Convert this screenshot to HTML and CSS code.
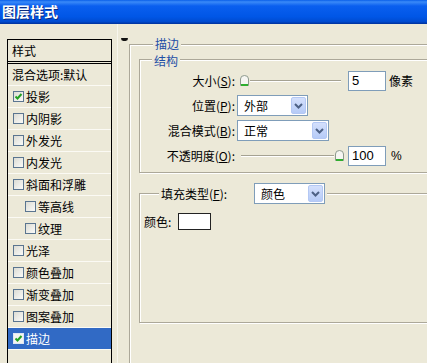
FILE: index.html
```html
<!DOCTYPE html>
<html lang="zh-CN">
<head>
  <meta charset="UTF-8" />
  <meta name="viewport" content="width=device-width, initial-scale=1.0"/>
  <title>图层样式</title>
  <link rel="stylesheet" href="styles.css">
</head>
<body>
  <div class="titlebar">图层样式</div>

  <div class="dialog">
    <div class="sidebar">
      <ul class="style-list">
        <li class="list-head">样式</li>
        <li class="item blend">混合选项:默认</li>
        <li class="item"><span class="check on"><svg width="9" height="9" viewBox="0 0 9 9"><path d="M1.5 4.5 L3.5 6.5 L7.5 2" fill="none" stroke="#21a121" stroke-width="2"/></svg></span>投影</li>
        <li class="item"><span class="check"></span>内阴影</li>
        <li class="item"><span class="check"></span>外发光</li>
        <li class="item"><span class="check"></span>内发光</li>
        <li class="item"><span class="check"></span>斜面和浮雕</li>
        <li class="item sub"><span class="check"></span>等高线</li>
        <li class="item sub"><span class="check"></span>纹理</li>
        <li class="item"><span class="check"></span>光泽</li>
        <li class="item"><span class="check"></span>颜色叠加</li>
        <li class="item"><span class="check"></span>渐变叠加</li>
        <li class="item"><span class="check"></span>图案叠加</li>
        <li class="item selected"><span class="check on"><svg width="9" height="9" viewBox="0 0 9 9"><path d="M1.5 4.5 L3.5 6.5 L7.5 2" fill="none" stroke="#21a121" stroke-width="2"/></svg></span>描边</li>
      </ul>
    </div>

    <div class="panel">
      <span class="grip"></span>
      <div class="group outer">
        <div class="group-title outer-title">描边</div>

        <div class="group inner">
          <div class="group-title">结构</div>

          <div class="field">
            <label>大小(<u>S</u>):</label>
            <div class="slider size">
              <svg class="thumb" width="11" height="13" viewBox="0 0 11 13"><path d="M1.5 5 Q1.5 1.5 5.5 1.5 Q9.5 1.5 9.5 5 V11.5 H1.5 Z" fill="#f6f6f2" stroke="#8e9a8e"/><path d="M2 11 H9" stroke="#2fae2f" stroke-width="2"/></svg>
              <span class="track"></span>
            </div>
            <div class="num">5</div>
            <span class="unit">像素</span>
          </div>

          <div class="field">
            <label>位置(<u>P</u>):</label>
            <div class="combo short">
              <span class="combo-text">外部</span>
              <span class="drop"><svg width="9" height="6" viewBox="0 0 9 6"><path d="M1 1 L4.5 4.5 L8 1" fill="none" stroke="#4d6185" stroke-width="2"/></svg></span>
            </div>
          </div>

          <div class="field">
            <label>混合模式(<u>B</u>):</label>
            <div class="combo long">
              <span class="combo-text">正常</span>
              <span class="drop"><svg width="9" height="6" viewBox="0 0 9 6"><path d="M1 1 L4.5 4.5 L8 1" fill="none" stroke="#4d6185" stroke-width="2"/></svg></span>
            </div>
          </div>

          <div class="field">
            <label>不透明度(<u>O</u>):</label>
            <div class="slider opacity">
              <span class="track"></span>
              <svg class="thumb" width="11" height="13" viewBox="0 0 11 13"><path d="M1.5 5 Q1.5 1.5 5.5 1.5 Q9.5 1.5 9.5 5 V11.5 H1.5 Z" fill="#f6f6f2" stroke="#8e9a8e"/><path d="M2 11 H9" stroke="#2fae2f" stroke-width="2"/></svg>
            </div>
            <div class="num">100</div>
            <span class="unit pct">%</span>
          </div>
        </div>

        <div class="group fill">
          <div class="group-title fill-title">
            <span class="fill-label">填充类型(<u>F</u>):</span>
            <div class="combo short">
              <span class="combo-text">颜色</span>
              <span class="drop"><svg width="9" height="6" viewBox="0 0 9 6"><path d="M1 1 L4.5 4.5 L8 1" fill="none" stroke="#4d6185" stroke-width="2"/></svg></span>
            </div>
          </div>
          <div class="color-row">
            <span>颜色:</span>
            <span class="swatch"></span>
          </div>
        </div>
      </div>
    </div>
  </div>
</body>
</html>
```

FILE: styles.css
```css
body {
  margin: 0;
  width: 427px;
  height: 363px;
  overflow: hidden;
  background: #ece9d8;
  font-family: "Noto Sans CJK SC", "Noto Sans", sans-serif;
  font-size: 12px;
  color: #000;
}

.titlebar {
  height: 24px;
  line-height: 23px;
  padding-left: 2px;
  font-size: 14px;
  font-weight: bold;
  color: #fff;
  text-shadow: 1px 1px #0a2a80;
  background: linear-gradient(#0a5fe9 0%, #3a8af8 8%, #0a5fef 25%, #0056e6 70%, #004bd0 90%, #00309a 100%);
}

.dialog {
  display: flex;
  height: 339px;
}

/* left list */
.sidebar {
  width: 117px;
  flex-shrink: 0;
  padding-top: 15px;
  box-sizing: border-box;
}

.style-list {
  list-style: none;
  margin: 0 0 0 7px;
  padding: 0;
  width: 105px;
  height: 330px;
  box-sizing: border-box;
  border: 1px solid #000;
  border-bottom: none;
}

.list-head {
  height: 21px;
  line-height: 21px;
  padding-left: 4px;
  border-bottom: 3px double #000;
}

.item {
  height: 21px;
  line-height: 21px;
  padding-left: 5px;
  border-bottom: 1px solid #fbfaf4;
  display: flex;
  align-items: center;
  white-space: nowrap;
}

.item.blend {
  padding-left: 4px;
}

.item.sub {
  padding-left: 17px;
}

.item.selected {
  background: #316ac5;
  color: #fff;
}

.check {
  width: 11px;
  height: 11px;
  box-sizing: border-box;
  margin-right: 2px;
  border: 1px solid #5a7590;
  background: linear-gradient(135deg, #dcdcd4, #fafaf8);
  display: flex;
  align-items: center;
  justify-content: center;
}

.item.selected .check {
  border-color: #dfe6f2;
  background: #f4f4f0;
}

/* right panel */
.panel {
  flex: 1;
  border-left: 1px solid #f7f6ee;
  overflow: hidden;
}

.grip {
  display: block;
  width: 7px;
  height: 3px;
  margin: 14px 0 0 3px;
  background: #111;
  border-radius: 1px 1px 4px 4px;
}

.group {
  border: 1px solid #aca899;
  box-shadow: inset 1px 1px 0 #fff, 1px 1px 0 #fff;
}

.group-title {
  width: fit-content;
  height: 14px;
  line-height: 14px;
  margin: -7px 0 0 14px;
  padding: 0 2px;
  background: #ece9d8;
  color: #1e4fa6;
}

.outer-title {
  height: 13px;
  line-height: 13px;
  margin-top: -8px;
}

.outer {
  width: 330px;
  margin: 3px 0 0 11px;
  padding: 0 0 80px 9px;
}

.inner {
  margin-top: 9px;
  padding-bottom: 4px;
}

.inner .group-title {
  margin-left: 12px;
  height: 13px;
  line-height: 13px;
  margin-top: -6px;
}

.field {
  height: 25px;
  display: flex;
  align-items: center;
}

.inner .group-title + .field {
  margin-top: 1px;
}

.field label {
  width: 95px;
  text-align: right;
  white-space: nowrap;
}

.slider {
  display: flex;
  align-items: center;
  height: 14px;
}

.slider.size {
  width: 102px;
  margin-left: 4px;
}

.slider.opacity {
  width: 104px;
  margin-left: 6px;
}

.track {
  flex: 1;
  height: 0;
  border-top: 1px solid #a5a292;
  border-bottom: 1px solid #fff;
  margin-top: 1px;
}

.thumb {
  flex-shrink: 0;
}

.num {
  width: 38px;
  height: 20px;
  box-sizing: border-box;
  margin-left: 7px;
  padding-left: 3px;
  border: 1px solid #7f9db9;
  background: #fff;
  font-family: "Liberation Sans", Arial, sans-serif;
  font-size: 13px;
  line-height: 18px;
}

.opacity + .num {
  margin-left: 3px;
}

.unit {
  margin-left: 3px;
}

.unit.pct {
  margin-left: 5px;
  font-family: "Liberation Sans", Arial, sans-serif;
}

.combo {
  height: 21px;
  box-sizing: border-box;
  margin-left: 2px;
  border: 1px solid #7f9db9;
  background: #fff;
  display: flex;
  align-items: center;
  justify-content: space-between;
}

.combo.short {
  width: 71px;
}

.combo.long {
  width: 92px;
}

.combo-text {
  padding-left: 6px;
}

.drop {
  width: 15px;
  height: 17px;
  box-sizing: border-box;
  margin-right: 1px;
  border: 1px solid #b4c8f4;
  border-radius: 2px;
  background: linear-gradient(#d4e0fc, #b6cbf7);
  display: flex;
  align-items: center;
  justify-content: center;
}

.fill {
  margin-top: 20px;
  padding-bottom: 92px;
}

.fill-title {
  height: 21px;
  margin: -11px 0 0 19px;
  display: flex;
  align-items: center;
  color: #000;
}

.fill-label {
  width: 93px;
}

.fill-title .combo {
  width: 71px;
  margin-left: 0;
}

.color-row {
  height: 17px;
  margin: 9px 0 0 4px;
  display: flex;
  align-items: center;
}

.swatch {
  width: 33px;
  height: 17px;
  box-sizing: border-box;
  margin-left: 7px;
  border: 1px solid #222;
  background: #fff;
}
```
